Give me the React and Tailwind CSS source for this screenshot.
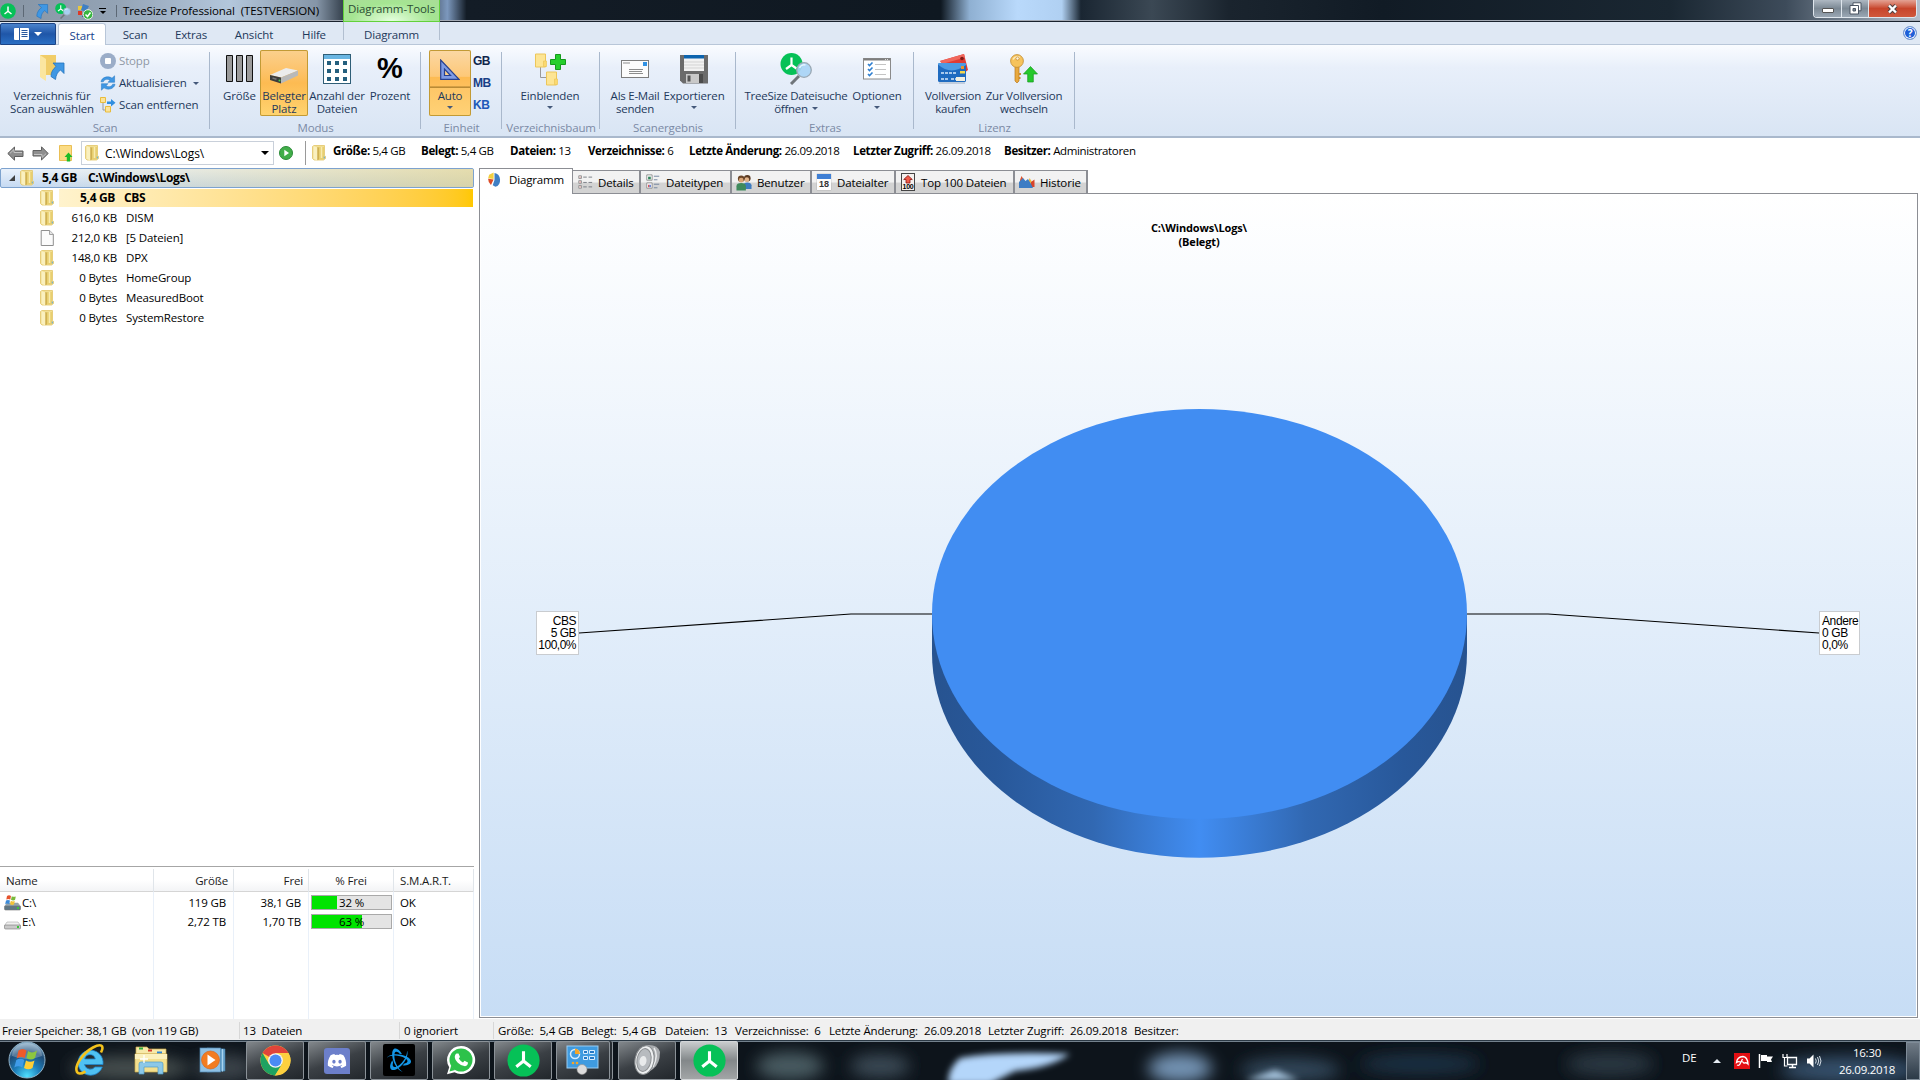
import clsx from 'clsx'
import { FaDiscord } from 'react-icons/fa'
import { SiBattledotnet } from 'react-icons/si'

const TREE = [
  { size: '5,4 GB', name: 'CBS', bar: true },
  { size: '616,0 KB', name: 'DISM' },
  { size: '212,0 KB', name: '[5 Dateien]', file: true },
  { size: '148,0 KB', name: 'DPX' },
  { size: '0 Bytes', name: 'HomeGroup' },
  { size: '0 Bytes', name: 'MeasuredBoot' },
  { size: '0 Bytes', name: 'SystemRestore' },
]

const DRIVES = [
  { name: 'C:\\', size: '119 GB', free: '38,1 GB', pct: 32, system: true },
  { name: 'E:\\', size: '2,72 TB', free: '1,70 TB', pct: 63 },
]

const INFO = [
  { label: 'Größe:', value: '5,4 GB', width: 'w-[88px]' },
  { label: 'Belegt:', value: '5,4 GB', width: 'w-[89px]' },
  { label: 'Dateien:', value: '13', width: 'w-[78px]' },
  { label: 'Verzeichnisse:', value: '6', width: 'w-[101px]' },
  { label: 'Letzte Änderung:', value: '26.09.2018', width: 'w-[164px]' },
  { label: 'Letzter Zugriff:', value: '26.09.2018', width: 'w-[151px]' },
  { label: 'Besitzer:', value: 'Administratoren', width: 'w-[160px]' },
]

const STATUS = [
  { text: 'Größe:  5,4 GB', width: 'w-[83px]' },
  { text: 'Belegt:  5,4 GB', width: 'w-[84px]' },
  { text: 'Dateien:  13', width: 'w-[70px]' },
  { text: 'Verzeichnisse:  6', width: 'w-[94px]' },
  { text: 'Letzte Änderung:', width: 'w-[95px]' },
  { text: '26.09.2018', width: 'w-[64px]' },
  { text: 'Letzter Zugriff:', width: 'w-[82px]' },
  { text: '26.09.2018', width: 'w-[64px]' },
  { text: 'Besitzer:', width: 'w-[60px]' },
]

/* ---------- icons ---------- */

function TreeSizeLogo({ size = 16 }) {
  return (
    <svg width={size} height={size} viewBox="0 0 32 32" className="shrink-0">
      <circle cx="16" cy="16" r="15.6" fill="#06c157" />
      <path d="M16 7v9.5M16 16.5L9 22M16 16.5l7 5.5" stroke="#fff" strokeWidth="3" fill="none" />
    </svg>
  )
}

function SearchLogo({ size = 32 }) {
  return (
    <svg width={size} height={size} viewBox="0 0 32 32" className="shrink-0">
      <circle cx="11.5" cy="11" r="11" fill="#06c157" />
      <path d="M11.5 4.5v7.5M11.5 12l-5.5 4M11.5 12l5 3.5" stroke="#fff" strokeWidth="2.2" fill="none" />
      <path d="M19 23l-8 8" stroke="#6f757a" strokeWidth="3" />
      <circle cx="24" cy="17" r="7.3" fill="#a9d4f5" fillOpacity=".92" stroke="#9aa8b3" strokeWidth="1.3" />
      <path d="M19.5 15a5 5 0 0 1 6-3" stroke="#e4f4ff" strokeWidth="1.6" fill="none" />
    </svg>
  )
}

function Folder() {
  return (
    <svg width="14" height="16" viewBox="0 0 14 16" className="shrink-0">
      <path d="M.5 1.5L2 .5h10.500v10l1 .8v2.200l-2 1.500H2L.5 13.500z" fill="#f1de92" stroke="#e2c568" strokeWidth=".8" />
      <path d="M7 2h5v12.500H7z" fill="#e8cf70" />
      <path d="M1.500 1l4 1.500v13L1.500 14z" fill="#faf0bf" />
      <path d="M5.300 2l1.700.5v12l-1.700.8z" fill="#cfb052" />
      <path d="M9.500 2v11" stroke="#f8ebb0" strokeWidth="1.500" />
      <path d="M12.300 11.500v2" stroke="#5aa7d8" strokeWidth="1" />
    </svg>
  )
}

function BlueArrow({ size = 14 }) {
  return (
    <svg width={size} height={size} viewBox="0 0 14 16" className="shrink-0">
      <path d="M3.500.5H13.500V10L10.500 7C7.500 9 6.500 12 6.500 15.500L2 13C2 9 4.500 5.500 7 3.800z" fill="#3f97e4" stroke="#2474bd" strokeWidth=".7" />
    </svg>
  )
}

function ScanFolder() {
  return (
    <svg width="26" height="30" viewBox="0 0 26 30">
      <path d="M1 1h16v20H6v5L1 22z" fill="#f1cd68" />
      <path d="M1 1l6 4v22l-6-4z" fill="#fbe6a0" />
      <path d="M14 9h11v10.500l-3.500-3.500c-3 2-4.500 5-5 9.500L12 22.500c0-4.500 2-7.500 5-10z" fill="#3f97e4" stroke="#2474bd" strokeWidth=".8" />
    </svg>
  )
}

function StopIcon() {
  return (
    <svg width="16" height="16" viewBox="0 0 16 16">
      <circle cx="8" cy="8" r="8" fill="#9badc8" />
      <rect x="5" y="5" width="6" height="6" rx="1" fill="#fff" />
    </svg>
  )
}

function RefreshIcon() {
  return (
    <svg width="16" height="16" viewBox="0 0 16 16" fill="#3f97e4" stroke="#2474bd" strokeWidth=".5">
      <path d="M1 6.800C1.500 2.500 8 .2 12 3.200L14.600.8V7.300H8L10 5.200C7 3.500 4 4.500 3.300 6.800z" />
      <path d="M15 9.200C14.500 13.500 8 15.800 4 12.800L1.400 15.200V8.700H8L6 10.800C9 12.500 12 11.500 12.700 9.200z" />
    </svg>
  )
}

function RemoveScanIcon() {
  return (
    <svg width="16" height="16" viewBox="0 0 16 16">
      <path d="M3 6v7h4" stroke="#999" fill="none" />
      <path d="M.5.5h5v5h-5zM5.500 9.500h5v5.500h-5z" fill="#fbe39a" stroke="#e9bc3c" />
      <path d="M7 4.500h4V2l4.500 3.800L11 9.500V7H7z" fill="#2f8ee0" />
    </svg>
  )
}

function BarsIcon() {
  return (
    <svg width="28" height="28" viewBox="0 0 28 28">
      <path d="M.5.5h6v26h-6zM10.500.5h6v26h-6zM20.500.5h6v26h-6z" fill="#9b9b9b" stroke="#111" />
    </svg>
  )
}

function DiskIcon() {
  return (
    <svg width="30" height="32" viewBox="0 0 30 32">
      <path d="M1 22L17 15l12 2.500L12 24.500z" fill="#ececec" />
      <path d="M1 22l11 2.500v6L1 27z" fill="#3c3c3c" />
      <path d="M12 24.500l17-7v5l-17 8z" fill="#b9b9b9" />
      <path d="M3.500 25l4 1.200" stroke="#777" strokeWidth="1.500" />
      <circle cx="10.500" cy="27.500" r="1" fill="#3fd34a" />
    </svg>
  )
}

function GridIcon() {
  return (
    <svg width="28" height="30" viewBox="0 0 28 30">
      <rect x=".5" y=".5" width="27" height="29" fill="#fff" stroke="#2f5e77" />
      <rect x="1" y="1" width="26" height="4" fill="#69b5e2" />
      <path d="M4 7h4v4H4zM12 7h4v4h-4zM20 7h4v4h-4zM4 15h4v4H4zM12 15h4v4h-4zM20 15h4v4h-4zM4 23h4v4H4zM12 23h4v4h-4zM20 23h4v4h-4z" fill="#245f7e" />
    </svg>
  )
}

function RulerIcon() {
  return (
    <svg width="20" height="21" viewBox="0 0 20 21">
      <path d="M.7 1v19.300H19z" fill="#7f9be4" stroke="#27408f" strokeWidth="1.200" />
      <path d="M4.500 10v6.500h6z" fill="#ffd28a" stroke="#27408f" strokeWidth="1.200" />
    </svg>
  )
}

function ShowIcon() {
  return (
    <svg width="32" height="33" viewBox="0 0 32 33">
      <path d="M6.500 14v10.500H13" stroke="#999" fill="none" />
      <path d="M1.500 1h10v13h-10zM12.500 19h10v13h-10z" fill="#fde594" stroke="#ecc65a" />
      <path d="M9.500 8h3v5.500h-3zM20.500 26h3v5.500h-3z" fill="#fbd970" stroke="#ecc65a" strokeWidth=".7" />
      <path d="M21.500 1.500h5v5h5v5h-5v5h-5v-5h-5v-5h5z" fill="#25cf2c" stroke="#159a1c" />
    </svg>
  )
}

function MailIcon() {
  return (
    <svg width="28" height="18" viewBox="0 0 28 18">
      <rect x=".5" y=".5" width="27" height="17" fill="#fcfcfc" stroke="#7d7d7d" />
      <rect x="22" y="2" width="4" height="4" fill="#3292e4" />
      <path d="M2 3h7M8 9.500h14M8 11.500h13M8 13.500h14" stroke="#8d8d8d" />
    </svg>
  )
}

function FloppyIcon() {
  return (
    <svg width="28" height="29" viewBox="0 0 28 29">
      <path d="M0 0h28v28.500H3L0 25.500z" fill="#6b6b6b" />
      <path d="M4 0h20v16H4z" fill="#f2f2f2" />
      <path d="M4 0h20v3.500H4z" fill="#0b63ae" />
      <path d="M4 7h20M4 10h20M4 13h20" stroke="#d3d3d3" />
      <path d="M6 19h13v9H6z" fill="#c9c9c9" />
      <path d="M7.500 20.500h3v6h-3z" fill="#555" />
      <path d="M19 19h4v9h-4z" fill="#4b4b4b" />
    </svg>
  )
}

function OptionsIcon() {
  return (
    <svg width="28" height="22" viewBox="0 0 28 22">
      <rect x=".5" y=".5" width="27" height="20.500" fill="#fff" stroke="#8a8a8a" />
      <path d="M1 1.500h26" stroke="#7e7e7e" strokeWidth="2" />
      <path d="M22 1.500h4" stroke="#ddd" strokeDasharray="1 1" />
      <path d="M5 6l1.500 1.500L9.500 4.500M5 11l1.500 1.500L9.500 9.500M5 16l1.500 1.500L9.500 14.500" stroke="#2f7fd0" strokeWidth="1.600" fill="none" />
      <path d="M12 6.500h11M12 11.500h11M12 16.500h11" stroke="#c4c4c4" />
    </svg>
  )
}

function CardsIcon() {
  return (
    <svg width="32" height="31" viewBox="0 0 32 31">
      <path d="M3 7L27 0l4 16-8 6z" fill="#df3b35" />
      <path d="M3 7L27 0l1 3.500L5 10z" fill="#f0675c" />
      <circle cx="25" cy="4.500" r="1.800" fill="#801a16" />
      <rect x="1" y="9" width="28" height="19" rx="1.500" fill="#1f6bc0" />
      <path d="M1 10.500Q14 22 29 11v-1q0-1-1.500-1h-25Q1 9 1 10.500z" fill="#4c9be4" />
      <path d="M24 12h3v3h-3z" fill="#e9932c" />
      <path d="M23 17h5v2.500h-5z" fill="#f6d64c" />
      <path d="M4 19h16M4 25h8M14 25h5" stroke="#d7e9fa" strokeWidth="1.500" strokeDasharray="3 1" />
      <path d="M19 23h9v4h-9z" fill="#f3efe0" />
      <path d="M2 29h26" stroke="#9fb0c4" />
    </svg>
  )
}

function KeyIcon() {
  return (
    <svg width="28" height="30" viewBox="0 0 28 30">
      <path d="M5 12h4v15l-2 2-2-2z" fill="#e9a93e" stroke="#b87a20" strokeWidth=".7" />
      <path d="M9 19h2v2H9zM9 23h1.500v2H9z" fill="#c98b2c" />
      <circle cx="7" cy="7" r="6.400" fill="#f6c35c" stroke="#c08a2f" strokeWidth=".8" />
      <path d="M3 5.500a5 5 0 0 1 7-2" stroke="#fdeab8" strokeWidth="1.600" fill="none" />
      <circle cx="7.500" cy="4.500" r="1.600" fill="#fff5dc" stroke="#b87a20" strokeWidth=".6" />
      <path d="M20.500 12.500l7 7.500h-4.200v8h-5.600v-8h-4.200z" fill="#25c92c" stroke="#159a1c" strokeWidth=".7" />
    </svg>
  )
}

function NavArrow({ flip }) {
  return (
    <svg width="17" height="15" viewBox="0 0 17 15" className={clsx('shrink-0', flip && 'rotate-180')}>
      <path d="M.8 7.500L7.500 1v4H16v5.500H7.500v3.700z" fill="#8e8e8e" stroke="#5f5f5f" />
      <path d="M3 7.300L7 3.500v3h8" stroke="#c4c4c4" fill="none" />
    </svg>
  )
}

function DocIcon() {
  return (
    <svg width="14" height="16" viewBox="0 0 14 16" className="shrink-0">
      <path d="M1.200.5h8.500l3.600 3.700v11.300H1.200z" fill="#fbfbfb" stroke="#8f8f8f" />
      <path d="M9.500.5v4h4" fill="#e4e4e4" stroke="#8f8f8f" strokeWidth=".8" />
    </svg>
  )
}

function PieIcon() {
  return (
    <svg width="15" height="16" viewBox="0 0 16 18">
      <path d="M8 9V1a7 8 0 0 1 1 15.700L6 15z" fill="#3f7fc4" />
      <path d="M7 8V.5L2 3 .8 7z" fill="#f2cf3f" />
      <path d="M7 8.500L.8 7.500Q.8 12 4 14.500z" fill="#dd4b27" />
    </svg>
  )
}

function ListIcon({ typed }) {
  return (
    <svg width="16" height="16" viewBox="0 0 16 18">
      {typed ? (
        <>
          <path d="M1 1h6v6H1zM1 10h6v6H1z" fill="#fff" stroke="#8c8c8c" />
          <path d="M2.500 3h3v3h-3z" fill="#31855b" />
          <path d="M2.500 12h1.500v3H2.500z" fill="#d44" />
          <path d="M4 12h1.500v3H4z" fill="#46c" />
          <path d="M9 2.500h6M9 6.500h4M9 11.500h6M9 15.500h4" stroke="#6b7e99" />
        </>
      ) : (
        <>
          <path d="M1 2h3v3H1zM1 7.500h3v3H1zM1 13h3v3H1z" fill="#fff" stroke="#8c8c8c" />
          <path d="M2 3h1v1H2zM2 8.500h1v1H2zM2 14h1v1H2z" fill="#c33" />
          <path d="M6 3.500h4M12 3.500h4M6 9.500h4M12 9.500h4M6 14.500h4M12 14.500h4" stroke="#71767e" />
        </>
      )}
    </svg>
  )
}

function UsersIcon() {
  return (
    <svg width="17" height="17" viewBox="0 0 17 18">
      <circle cx="12" cy="4.500" r="3.500" fill="#5a3a22" />
      <circle cx="11.500" cy="6" r="2.500" fill="#e2b48a" />
      <path d="M8 16v-4q0-3 4-3t4.500 3v4z" fill="#3d7cc0" />
      <circle cx="5.500" cy="5" r="3.500" fill="#6b4628" />
      <circle cx="5.500" cy="6.500" r="2.500" fill="#d9a577" />
      <path d="M.5 17.500V13q0-3.500 5-3.500t5 3.500v4.500z" fill="#3f8a5c" />
    </svg>
  )
}

function CalendarIcon() {
  return (
    <span className="flex h-[16px] w-[14px] flex-col bg-[#fdfdfd] shadow-[0_0_1px_#888]">
      <span className="h-[5px] bg-[#3f7fd4]" />
      <span className="text-center font-['Liberation_Sans'] text-[9px] leading-[11px] font-bold tracking-normal text-[#333]">18</span>
    </span>
  )
}

function Top100Icon() {
  return (
    <span className="flex h-[18px] w-[14px] flex-col items-center border border-[#444] bg-[#f4f0ee] pt-px">
      <svg width="10" height="9" viewBox="0 0 10 9">
        <path d="M5 .5l4.300 4H7V8H3V4.500H.7z" fill="#f05a48" stroke="#8c1410" strokeWidth=".8" />
      </svg>
      <span className="font-['Liberation_Sans'] text-[7px] leading-[6px] font-bold tracking-[-0.3px] text-black">100</span>
    </span>
  )
}

function HistoryIcon() {
  return (
    <svg width="16" height="16" viewBox="0 0 16 16">
      <path d="M1 11V6l1.500-4L5 6l1 6z" fill="#e0522b" />
      <path d="M8 13l2.500-9 2 3 1 6z" fill="#f0b93a" />
      <path d="M12 13V8l3.500-2.500V13z" fill="#d8442a" />
      <path d="M0 14V8l4-4 2.500 3L9 5l2.500 4L14 14z" fill="#3d7cc4" />
    </svg>
  )
}

function DriveIcon({ system }) {
  return (
    <svg width="17" height="17" viewBox="0 0 17 17" className="shrink-0">
      <path d="M3 9h11l2.500 3.500h-16z" fill={system ? '#93a5ae' : '#f0f0f0'} stroke="#999" strokeWidth=".5" />
      <rect x=".5" y="12" width="16" height="4" rx="1" fill={system ? '#5f7783' : '#c9c9c9'} stroke="#777" strokeWidth=".6" />
      <rect x="13" y="13" width="2" height="2" fill="#3bc43b" />
      {system && (
        <>
          <path d="M3 2q2-1.500 4 0L6.300 5.500q-2-1-4 0z" fill="#e5532d" />
          <path d="M7.800 2.200q2 1.200 4 .2L11 6q-2 1-4-.2z" fill="#79b93b" />
          <path d="M2 6.500q2-1.200 4 0L5.200 10q-2-1-4 0z" fill="#3b8ad8" />
          <path d="M6.800 6.800q2 1.200 4 .2L10 10.500q-2 1-4-.2z" fill="#f3c238" />
        </>
      )}
    </svg>
  )
}

function Caret({ className }) {
  return <span className={clsx('inline-block border-x-[3px] border-t-[3px] border-x-transparent', className || 'border-t-[#44597a]')} />
}

/* ---------- title bar ---------- */

function TitleBar() {
  return (
    <div className="relative flex h-[22px] shrink-0 overflow-hidden bg-[#101a24]">
      <svg className="absolute inset-0" width="1920" height="22">
        <defs>
          <linearGradient id="glass" x1="0" x2="1">
            <stop offset="0" stopColor="#8794a3" />
            <stop offset=".06" stopColor="#93a3b5" />
            <stop offset=".12" stopColor="#b3c7dc" />
            <stop offset=".165" stopColor="#8595a7" />
            <stop offset=".178" stopColor="#3a4653" />
            <stop offset=".225" stopColor="#4d5d72" />
            <stop offset=".233" stopColor="#7c98bd" />
            <stop offset=".243" stopColor="#131c26" />
            <stop offset=".49" stopColor="#0f1821" />
            <stop offset=".505" stopColor="#8fb0d2" />
            <stop offset=".53" stopColor="#b9d9fb" />
            <stop offset=".553" stopColor="#b0d0f2" />
            <stop offset=".563" stopColor="#1a2632" />
            <stop offset=".6" stopColor="#3b4854" />
            <stop offset=".64" stopColor="#1a242e" />
            <stop offset=".72" stopColor="#111b25" />
            <stop offset=".87" stopColor="#1a2732" />
            <stop offset=".93" stopColor="#3d4b5a" />
            <stop offset="1" stopColor="#b4c0cd" />
          </linearGradient>
        </defs>
        <rect width="1920" height="22" fill="url(#glass)" />
        <rect y="20" width="1920" height="1" fill="#a3a9b3" />
        <rect y="21" width="1920" height="1" fill="#1a222d" />
      </svg>
      <div className="relative flex w-[343px] items-center text-[11.5px] text-black">
        <TreeSizeLogo />
        <span className="ml-[7px] h-3 w-px bg-[#5c6875]" />
        <span className="ml-[10px]"><BlueArrow size={15} /></span>
        <span className="ml-[6px]"><SearchLogo size={16} /></span>
        <svg className="ml-[6px]" width="16" height="17" viewBox="0 0 16 17">
          <path d="M1 3h5v4H1z" fill="#e9c83f" />
          <path d="M6 1l6 2-3 6-5-2z" fill="#3f7fc4" />
          <path d="M1 8h4v4H1z" fill="#dc3a28" />
          <path d="M8 8h3v6H5z" fill="#2c4b91" />
          <circle cx="11" cy="11.500" r="4.800" fill="#36b53f" stroke="#e6efe6" />
          <path d="M8.500 11.500l2 2 3-4" stroke="#fff" strokeWidth="1.500" fill="none" />
        </svg>
        <span className="ml-[6px] flex flex-col items-center gap-[2px]">
          <span className="h-px w-[7px] bg-black" />
          <Caret className="border-t-black" />
        </span>
        <span className="ml-[10px] h-3 w-px bg-[#5c6875]" />
        <span className="ml-[6px] whitespace-pre tracking-[-0.1px]">TreeSize Professional  (TESTVERSION)</span>
      </div>
      <div className="relative flex h-[22px] w-[97px] justify-center border-x border-b border-[#62d13a] bg-[radial-gradient(ellipse_at_bottom,#e6ffdf,#a5e592_60%,#a9dd98)] text-[11.5px] leading-[18px] tracking-[-0.1px] text-[#2c4c35]">
        Diagramm-Tools
      </div>
      <div className="relative mr-[3px] ml-auto flex h-[18px] overflow-hidden rounded-b border border-t-0 border-[#dfe6ed]">
        <span className="flex w-[28px] items-center justify-center border-r border-[#dfe6ed] bg-linear-to-b from-[#aeb8c2] via-[#7b8894] to-[#9aa7b4]">
          <span className="mt-1 h-[5px] w-[12px] rounded-[1px] border border-[#555] bg-white" />
        </span>
        <span className="flex w-[27px] items-center justify-center border-r border-[#dfe6ed] bg-linear-to-b from-[#aeb8c2] via-[#7b8894] to-[#9aa7b4]">
          <svg width="13" height="13" viewBox="0 0 13 13" fill="#fff" stroke="#4b5563">
            <path d="M4 .8h8v8H4z" />
            <path d="M1 3.500h8.500V12H1z" />
            <path d="M4 6.500h2.500V9H4z" fill="#7b8894" />
          </svg>
        </span>
        <span className="flex w-[47px] items-center justify-center bg-linear-to-b from-[#e3a294] via-[#c7452b] to-[#d0583c]">
          <svg width="13" height="12" viewBox="0 0 13 12">
            <path d="M3 2.500l7 7M10 2.500l-7 7" stroke="#4d4242" strokeWidth="4.400" />
            <path d="M3 2.500l7 7M10 2.500l-7 7" stroke="#fff" strokeWidth="2.400" />
          </svg>
        </span>
      </div>
    </div>
  )
}

/* ---------- ribbon ---------- */

function RibbonTabs() {
  return (
    <div className="flex h-[23px] shrink-0 border-b border-[#b8c6d8] bg-[#dfe8f4] text-[11.5px] leading-[26px] text-[#1e395b]">
      <div className="mt-px mr-[2px] flex h-[22px] w-[56px] items-center justify-center gap-[5px] rounded-t-[2px] border border-[#1c4486] bg-linear-to-b from-[#4a83cb] via-[#1f56a8] to-[#2a6fc4]">
        <svg width="15" height="12" viewBox="0 0 15 12">
          <rect width="15" height="12" rx="1" fill="#fff" />
          <path d="M5.500 0v12" stroke="#2c5a9e" />
          <path d="M7.500 2.500h6M7.500 4.500h6M7.500 6.500h6M7.500 8.500h6" stroke="#2c5a9e" />
        </svg>
        <span className="border-x-4 border-t-4 border-x-transparent border-t-white" />
      </div>
      <div className="relative z-10 mt-px h-[22px] w-[48px] rounded-t-[3px] border border-b-0 border-[#b8c6d8] bg-white text-center leading-[23px] text-[#15428b]">Start</div>
      <div className="w-[58px] text-center">Scan</div>
      <div className="w-[54px] text-center">Extras</div>
      <div className="w-[72px] text-center">Ansicht</div>
      <div className="w-[48px] text-center">Hilfe</div>
      <div className="ml-[5px] h-[18px] w-[97px] border-x border-[#b2bfd0] text-center">Diagramm</div>
      <div className="mt-[4px] mr-[3px] ml-auto flex size-[14px] items-center justify-center rounded-full border border-[#7c9cd0] bg-[#1f5fd8] text-[10px] leading-none font-bold text-white ring-1 ring-white ring-inset">?</div>
    </div>
  )
}

function Group({ title, className, children }) {
  return (
    <div className={clsx('relative flex h-full shrink-0 flex-col', className)}>
      <div className="flex h-[76px] items-start pt-[5px]">{children}</div>
      <div className="text-center leading-[14px] text-[#7b8aa5]">{title}</div>
      <span className="absolute top-[7px] right-0 h-[77px] w-px bg-[#a9b8cc]" />
    </div>
  )
}

function BigButton({ icon, lines, caret, className }) {
  return (
    <div className={clsx('flex h-[66px] shrink-0 flex-col items-center whitespace-nowrap', className)}>
      <div className="mb-px flex h-[38px] items-center justify-center">{icon}</div>
      {lines.map((l, i) => (
        <div key={l} className="flex h-[13px] items-center gap-[4px] leading-[13px]">
          {l}
          {caret && i === 1 && <Caret />}
        </div>
      ))}
      {caret && lines.length === 1 && <Caret className="mt-[4px] border-t-[#44597a]" />}
    </div>
  )
}

function Ribbon() {
  return (
    <div className="flex h-[93px] shrink-0 border-b-2 border-[#a9b8cc] bg-linear-to-b from-[#fafcff] via-[#e8effa] via-25% to-[#d9e5f4] text-[11.5px] text-[#1e395b]">
      <Group title="Scan" className="w-[210px]">
        <BigButton className="ml-[8px] w-[88px]" icon={<ScanFolder />} lines={['Verzeichnis für', 'Scan auswählen']} />
        <div className="ml-[4px] flex flex-col leading-[22px]">
          <div className="flex items-center gap-[3px] text-[#8f98a5]"><StopIcon />Stopp</div>
          <div className="flex items-center gap-[3px]"><RefreshIcon />Aktualisieren <Caret className="ml-[3px] border-t-[#44597a]" /></div>
          <div className="flex items-center gap-[3px]"><RemoveScanIcon />Scan entfernen</div>
        </div>
      </Group>
      <Group title="Modus" className="w-[211px]">
        <BigButton className="ml-[9px] w-[41px]" icon={<BarsIcon />} lines={['Größe']} />
        <BigButton className="w-[48px] rounded-[2px] bg-linear-to-b from-[#fbd08d] via-[#fdbb52] via-50% to-[#ffd470] ring-1 ring-[#c29a35] ring-inset" icon={<DiskIcon />} lines={['Belegter', 'Platz']} />
        <BigButton className="w-[58px]" icon={<GridIcon />} lines={['Anzahl der', 'Dateien']} />
        <BigButton
          className="w-[48px]"
          icon={<span className="font-['Liberation_Sans'] text-[29px] font-bold tracking-normal text-black">%</span>}
          lines={['Prozent']}
        />
      </Group>
      <Group title="Einheit" className="w-[81px]">
        <BigButton
          className="ml-[8px] w-[42px] rounded-[2px] bg-[linear-gradient(#fbd8a5,#fdc878_40%,#fdbb52_41%,#fdbf5c_55%,#b98a35_55.500%,#b98a35_57%,#fdc667_57.500%,#ffd276)] ring-1 ring-[#c29a35] ring-inset"
          icon={<RulerIcon />}
          lines={['Auto']}
          caret
        />
        <div className="ml-[2px] flex flex-col font-['Liberation_Sans'] text-[12px] leading-[22px] font-bold tracking-[-0.5px]">
          <span className="text-[#10254c]">GB</span>
          <span className="text-[#173f86]">MB</span>
          <span className="text-[#2159b8]">KB</span>
        </div>
      </Group>
      <Group title="Verzeichnisbaum" className="w-[98px]">
        <BigButton className="w-[96px]" icon={<ShowIcon />} lines={['Einblenden']} caret />
      </Group>
      <Group title="Scanergebnis" className="w-[136px]">
        <BigButton className="ml-[7px] w-[56px] tracking-[-0.25px]" icon={<MailIcon />} lines={['Als E-Mail', 'senden']} />
        <BigButton className="w-[62px]" icon={<FloppyIcon />} lines={['Exportieren']} caret />
      </Group>
      <Group title="Extras" className="w-[178px]">
        <BigButton className="ml-[8px] w-[104px] tracking-[-0.25px]" icon={<SearchLogo />} lines={['TreeSize Dateisuche', 'öffnen']} caret />
        <BigButton className="w-[58px]" icon={<OptionsIcon />} lines={['Optionen']} caret />
      </Group>
      <Group title="Lizenz" className="w-[161px]">
        <BigButton className="ml-[9px] w-[60px] tracking-[-0.25px]" icon={<CardsIcon />} lines={['Vollversion', 'kaufen']} />
        <BigButton className="w-[82px] tracking-[-0.25px]" icon={<KeyIcon />} lines={['Zur Vollversion', 'wechseln']} />
      </Group>
    </div>
  )
}

/* ---------- address bar ---------- */

function AddressBar() {
  return (
    <div className="flex h-[30px] shrink-0 items-center bg-white text-[11.5px]">
      <span className="ml-[7px]"><NavArrow /></span>
      <span className="ml-[8px]"><NavArrow flip /></span>
      <svg className="ml-[10px]" width="14" height="17" viewBox="0 0 14 17">
        <path d="M.5.5h12v15H.5z" fill="#fbdc85" stroke="#eabf55" />
        <path d="M9.500 7.500l4 4.500h-2.300v4.500H7.800V12H5.500z" fill="#1fbc26" />
      </svg>
      <div className="ml-[8px] flex h-[24px] w-[193px] items-center border border-[#c9d0da] pl-[3px]">
        <Folder />
        <span className="ml-[6px] pt-px text-[12px] tracking-[-0.1px]">C:\Windows\Logs\</span>
        <span className="mr-[4px] ml-auto border-x-4 border-t-4 border-x-transparent border-t-black" />
      </div>
      <svg className="ml-[5px]" width="14" height="14" viewBox="0 0 14 14">
        <circle cx="7" cy="7" r="6.500" fill="#41ae49" stroke="#2c8a38" />
        <path d="M5.300 3.800L10 7l-4.700 3.200z" fill="#fff" />
      </svg>
      <span className="ml-[12px] h-[24px] w-px bg-[#9a9a9a]" />
      <span className="ml-[6px]"><Folder /></span>
      <div className="mb-[5px] ml-[7px] flex whitespace-nowrap">
        {INFO.map((i) => (
          <div key={i.label} className={clsx('shrink-0 tracking-[-0.35px]', i.width)}>
            <b>{i.label}</b> {i.value}
          </div>
        ))}
      </div>
    </div>
  )
}

/* ---------- left side ---------- */

function TreePanel() {
  return (
    <div className="flex h-[698px] flex-col text-[11.5px]">
      <div className="flex h-[20px] w-[474px] items-center rounded-[2px] border border-[#7da2ce] bg-linear-to-b from-[#e9f1fb] to-[#c6daf2] pl-[7px]">
        <svg width="8" height="8" viewBox="0 0 8 8">
          <path d="M7 1v6H1z" fill="#404040" />
        </svg>
        <span className="ml-[4px]"><Folder /></span>
        <div className="ml-[5px] flex h-[18px] flex-1 items-center bg-linear-to-r from-transparent to-[#e3cf7a]/60 pl-[3px] text-[12px] font-bold tracking-[-0.35px]">
          <span className="w-[46px]">5,4 GB</span>
          <span>C:\Windows\Logs\</span>
        </div>
      </div>
      {TREE.map((row) => (
        <div key={row.name} className="flex h-[20px] w-[473px] items-center pl-[40px]">
          {row.file ? <DocIcon /> : <Folder />}
          <div
            className={clsx(
              'ml-[5px] flex h-[18px] flex-1 items-center',
              row.bar && 'bg-linear-to-r from-[#fff3cd] to-[#ffc800] text-[12px] font-bold tracking-[-0.35px]'
            )}
          >
            <span className={clsx('mr-[9px] text-right', row.bar ? 'w-[56px]' : 'w-[58px]')}>{row.size}</span>
            <span>{row.name}</span>
          </div>
        </div>
      ))}
    </div>
  )
}

function DrivePanel() {
  const cols = 'grid grid-cols-[154px_80px_75px_85px_80px]'
  return (
    <div className="flex h-[153px] w-[474px] flex-col border-t border-[#a6a6a6] text-[11.5px]">
      <div className={clsx(cols, 'mt-[2px] h-[23px] border-b border-[#d5d5d5] bg-linear-to-b from-white from-50% to-[#f3f4f6] leading-[23px] text-[#1b1b1b]')}>
        <span className="border-r border-[#e0e5ea] pl-[6px]">Name</span>
        <span className="border-r border-[#e0e5ea] pr-[5px] text-right">Größe</span>
        <span className="border-r border-[#e0e5ea] pr-[5px] text-right">Frei</span>
        <span className="border-r border-[#e0e5ea] text-center">% Frei</span>
        <span className="border-r border-[#e0e5ea] pl-[6px]">S.M.A.R.T.</span>
      </div>
      <div className={clsx(cols, 'flex-1')}>
        <div className="border-r border-[#e9f0f9] pt-px pl-[4px]">
          {DRIVES.map((d) => (
            <div key={d.name} className="flex h-[19px] items-center gap-[1px]"><DriveIcon system={d.system} />{d.name}</div>
          ))}
        </div>
        <div className="border-r border-[#e9f0f9] pt-px pr-[7px] text-right leading-[19px]">
          {DRIVES.map((d) => <div key={d.name}>{d.size}</div>)}
        </div>
        <div className="border-r border-[#e9f0f9] pt-px pr-[7px] text-right leading-[19px]">
          {DRIVES.map((d) => <div key={d.name}>{d.free}</div>)}
        </div>
        <div className="border-r border-[#e9f0f9] pt-[3px] pl-[2px]">
          {DRIVES.map((d) => (
            <div key={d.name} className="relative mb-[4px] h-[15px] w-[81px] border border-[#a9a9a9] bg-[#e4e4e4] text-center leading-[13px]">
              <div className="h-full bg-[#00e400]" style={{ width: `${d.pct}%` }} />
              <span className="absolute inset-0">{d.pct} %</span>
            </div>
          ))}
        </div>
        <div className="border-r border-[#e9f0f9] pt-px pl-[6px] leading-[19px]">
          {DRIVES.map((d) => <div key={d.name}>OK</div>)}
        </div>
      </div>
    </div>
  )
}

/* ---------- right side ---------- */

const TABS = [
  { label: 'Details', icon: <ListIcon />, width: 'w-[68px]' },
  { label: 'Dateitypen', icon: <ListIcon typed />, width: 'w-[91px]' },
  { label: 'Benutzer', icon: <UsersIcon />, width: 'w-[80px]' },
  { label: 'Dateialter', icon: <CalendarIcon />, width: 'w-[84px]' },
  { label: 'Top 100 Dateien', icon: <Top100Icon />, width: 'w-[119px]' },
  { label: 'Historie', icon: <HistoryIcon />, width: 'w-[73px]' },
]

function Chart() {
  return (
    <div className="relative h-[821px] bg-linear-to-b from-white to-[#c7ddf5]">
      <svg width="1434" height="820" viewBox="481 195 1434 820">
        <defs>
          <linearGradient id="rim" x1="0" x2="1">
            <stop offset="0" stopColor="#275390" />
            <stop offset=".12" stopColor="#28589a" />
            <stop offset=".3" stopColor="#3168b2" />
            <stop offset=".5" stopColor="#418df2" />
            <stop offset=".7" stopColor="#3168b2" />
            <stop offset=".88" stopColor="#28589a" />
            <stop offset="1" stopColor="#275390" />
          </linearGradient>
        </defs>
        <path d="M932 614v39a267.500 204.800 0 0 0 535 0v-39z" fill="url(#rim)" />
        <ellipse cx="1199.500" cy="614" rx="267.500" ry="205" fill="#418df2" />
        <path d="M579 633L851 614H932M1467 614H1548L1819 633" stroke="#000" strokeWidth="1.100" fill="none" />
      </svg>
      <div className="absolute top-[26px] left-0 flex w-[1436px] flex-col text-center text-[11px] leading-[14px] font-bold tracking-[-0.15px] text-black">
        <span>C:\Windows\Logs\</span>
        <span>(Belegt)</span>
      </div>
      <div className="absolute top-[416px] left-[55px] flex w-[43px] flex-col border border-[#c9ccd0] bg-white py-[3px] pr-[2px] text-right font-['Liberation_Sans'] text-[12px] leading-[12px] tracking-[-0.5px] text-black">
        <span>CBS</span>
        <span>5 GB</span>
        <span>100,0%</span>
      </div>
      <div className="absolute top-[416px] left-[1338px] flex w-[41px] flex-col border border-[#c9ccd0] bg-white py-[3px] pl-[2px] font-['Liberation_Sans'] text-[12px] leading-[12px] tracking-[-0.4px] text-black">
        <span>Andere</span>
        <span>0 GB</span>
        <span>0,0%</span>
      </div>
    </div>
  )
}

function RightPanel() {
  return (
    <div className="flex w-[1441px] flex-col bg-white">
      <div className="flex h-[25px] items-end text-[11.5px]">
        <div className="relative z-10 -mb-px flex h-[26px] w-[94px] items-center gap-[7px] border border-b-0 border-[#8c8e94] bg-white pb-[3px] pl-[7px]">
          <PieIcon />
          Diagramm
        </div>
        {TABS.map((t) => (
          <div
            key={t.label}
            className={clsx('flex h-[23px] items-center gap-[5px] border-t border-r-2 border-[#8c8e94] bg-linear-to-b from-[#f2f2f2] from-50% to-[#d3d3d3] to-55% pl-[4px] whitespace-nowrap', t.width)}
          >
            <span className="flex w-[16px] shrink-0 justify-center">{t.icon}</span>
            <span className="pt-[2px]">{t.label}</span>
          </div>
        ))}
      </div>
      <div className="mr-[2px] mb-px flex-1 border border-[#8c8e94] p-px">
        <Chart />
      </div>
    </div>
  )
}

function StatusBar() {
  return (
    <div className="flex h-[21px] shrink-0 items-center bg-[#f0f0f0] pt-[2px] text-[11.5px] whitespace-pre text-black">
      <span className="w-[239px] pl-[2px]">Freier Speicher: 38,1 GB  (von 119 GB)</span>
      <span className="w-[160px] border-l border-[#d7d7d7] pl-[3px]">13  Dateien</span>
      <span className="w-[94px] border-l border-[#d7d7d7] pl-[4px]">0 ignoriert</span>
      <span className="flex border-l border-[#d7d7d7] pl-[4px]">
        {STATUS.map((s, i) => (
          <span key={i} className={clsx('shrink-0', s.width)}>{s.text}</span>
        ))}
      </span>
    </div>
  )
}

/* ---------- taskbar ---------- */

function TaskButton({ active, stacked, className, children }) {
  return (
    <div
      className={clsx(
        'flex h-[39px] shrink-0 items-center justify-center rounded-[2px] border',
        active ? 'border-[#d3d6d8] bg-linear-to-b from-[#c9cccd] via-[#83888a] to-[#a2a5a6]' : 'border-[#8b9298] bg-linear-160 from-[#83888c] via-[#3b4045] to-[#22272c]',
        stacked && 'shadow-[2px_0_0_#252b31,3px_0_0_#8b9298]',
        className || 'w-[58px]'
      )}
    >
      {children}
    </div>
  )
}

function StartOrb() {
  return (
    <svg width="38" height="38" viewBox="0 0 38 38">
      <defs>
        <radialGradient id="orb" cx=".5" cy=".95" r=".9">
          <stop offset="0" stopColor="#4fe0ff" />
          <stop offset=".4" stopColor="#1d7fbb" />
          <stop offset=".75" stopColor="#1f4d78" />
          <stop offset="1" stopColor="#7fa6c2" />
        </radialGradient>
      </defs>
      <circle cx="19" cy="19" r="18" fill="url(#orb)" stroke="#8fb2c8" strokeWidth="1" />
      <path d="M4 15a15 13 0 0 1 30 0q-15 6-30 0z" fill="#fff" fillOpacity=".25" />
      <path d="M10.500 9.500q4-3 8 0L16.700 17q-4-2-8 .5z" fill="#ee5a2a" />
      <path d="M20 10q4 3 9-.5L27 17q-4 3-8.500 0z" fill="#8cc63f" />
      <path d="M8.300 19q4-2.500 8 0l-2 7.500q-4-2.500-8 0z" fill="#3f9be8" />
      <path d="M18 19.500q4 2.500 8.500 0l-2 7.500q-4 2.500-8.500 0z" fill="#ffce35" />
    </svg>
  )
}

function IeIcon() {
  return (
    <svg width="32" height="32" viewBox="0 0 32 32">
      <path d="M29 20.500H10.500a6 6 0 0 0 10.500 2.500h7.300A12.500 12.500 0 1 1 29 17.500zM10.700 15h10.600a5.400 5.400 0 0 0-10.600 0z" fill="#4fc1f2" stroke="#1f86cf" strokeWidth=".8" fillRule="evenodd" />
      <path d="M27 8.500C31 1 26.500-.5 19 3.500 9 9 0 22 3 28c1.500 2.500 5 1.500 8.500-.5" stroke="#f4c21c" strokeWidth="2.600" fill="none" />
    </svg>
  )
}

function ExplorerIcon() {
  return (
    <svg width="34" height="32" viewBox="0 0 34 32">
      <path d="M2 3h11l2 2h17v5H2z" fill="#f7e9a9" stroke="#c9a94c" strokeWidth=".7" />
      <path d="M5 3.500h4v2H5z" fill="#2fae3d" />
      <path d="M14 5.500h4v2h-4z" fill="#d23c2c" />
      <path d="M23 7.500h5v2h-5z" fill="#2c86d8" />
      <path d="M1 10h32v18H1z" fill="#f3df8e" stroke="#c9a94c" strokeWidth=".7" />
      <path d="M1 10h32v5H1z" fill="#fbf0bd" />
      <path d="M5 30V20q0-2 2-2h20q2 0 2 2v10h-5v-7H10v7z" fill="#8cc8e8" stroke="#4f9cc8" strokeWidth=".7" />
      <path d="M10 11v8M6 15h8" stroke="#fff" strokeWidth="1.300" />
    </svg>
  )
}

function PlayerIcon() {
  return (
    <svg width="27" height="26" viewBox="0 0 27 26">
      <path d="M8 1l18 1v22l-18 1z" fill="#6ba6cf" stroke="#3f7aa5" strokeWidth=".6" />
      <path d="M23.500 2v22.500" stroke="#a9d3ee" />
      <rect x="1" y="1" width="20.500" height="24" fill="#8fc1e4" stroke="#4e87b1" strokeWidth=".7" />
      <circle cx="11.500" cy="13" r="9" fill="#f27c21" stroke="#d86010" strokeWidth=".6" />
      <path d="M8.500 7.500l8 5.500-8 5.500z" fill="#fff" />
    </svg>
  )
}

function ChromeIcon() {
  return (
    <svg width="31" height="31" viewBox="0 0 32 32">
      <circle cx="16" cy="16" r="15.500" fill="#fdd03f" />
      <path d="M16 16L2.600 8.200A15.500 15.500 0 0 1 29.400 8.300H16z" fill="#e0443a" />
      <path d="M2.600 8.200A15.500 15.500 0 0 0 15.500 31.500L22.500 20 16 16 9.500 20z" fill="#1ea261" />
      <path d="M16 8.300h13.400A15.500 15.500 0 0 1 15.500 31.500L22.600 20z" fill="#fdd03f" />
      <circle cx="16" cy="16" r="7.600" fill="#f4f4f4" />
      <circle cx="16" cy="16" r="6.200" fill="#4a8af4" />
    </svg>
  )
}

function DiscordTile() {
  return (
    <span className="mt-px flex size-[26px] items-center justify-center rounded-[3px] rounded-br-none bg-[#6c7fca]">
      <FaDiscord size={20} color="#fff" />
    </span>
  )
}

function WhatsAppIcon() {
  return (
    <svg width="30" height="30" viewBox="0 0 30 30">
      <path d="M15 1a14 14 0 1 1-6.500 26.300L1 29.300l2.200-7A14 14 0 0 1 15 1z" fill="#fff" />
      <circle cx="15" cy="15" r="11.500" fill="#2dc24a" />
      <path d="M3.500 26.500l1.700-6 4 4.500z" fill="#2dc24a" />
      <path d="M10.500 8.500l2 0 1.500 3.500-1.200 1.600q1.400 2.600 4.200 3.800l1.500-1.600 3.500 1.700q0 3-3 3.700-3.500 0-7.200-3.500-3.300-3.500-3-6.500.4-2 1.700-2.700z" fill="#fff" />
    </svg>
  )
}

function ControlPanelIcon() {
  return (
    <svg width="34" height="30" viewBox="0 0 34 30">
      <rect x="1" y="1" width="31" height="22" fill="#3f9be0" stroke="#9ccdf2" />
      <circle cx="9" cy="9" r="4.500" fill="none" stroke="#d6edff" strokeWidth="1.500" />
      <path d="M9 9V3.500a5.500 5.500 0 0 1 5 5.500z" fill="#f4a62a" />
      <path d="M17.500 5.500h4v3h-4zM23.500 5.500h5v3h-5zM17.500 11.500h4v3h-4zM23.500 11.500h5v3h-5z" fill="#2478c4" stroke="#d6edff" />
      <circle cx="7" cy="18" r="1.300" fill="#f4a62a" />
      <circle cx="11" cy="18" r="1.300" fill="#f4a62a" />
      <circle cx="16" cy="24.500" r="5" fill="#dcdcdc" stroke="#8f8f8f" strokeWidth=".6" />
    </svg>
  )
}

function SpeakerIcon() {
  return (
    <svg width="30" height="32" viewBox="0 0 30 32">
      <path d="M14 1q12-1 14 7 0 12-7 17l-7 5z" fill="#a9acaf" />
      <path d="M22 4q5 7-1 19" stroke="#e9ebec" strokeWidth="1.500" fill="none" />
      <ellipse cx="12.500" cy="16" rx="9.500" ry="14.500" fill="#eef0f1" stroke="#85898c" transform="rotate(10 12 16)" />
      <ellipse cx="12" cy="16" rx="7" ry="11.500" fill="#b7bbbf" stroke="#8d9093" transform="rotate(10 12 16)" />
      <ellipse cx="11" cy="17" rx="3.500" ry="5" fill="#e9ebec" transform="rotate(10 11 17)" />
    </svg>
  )
}

function Taskbar() {
  return (
    <div className="relative flex h-[40px] shrink-0 items-center overflow-hidden bg-[#0d141b] text-[12px] text-white">
      {/* blurred wallpaper under the glass */}
      <svg className="absolute inset-0" width="1920" height="40">
        <defs>
          <filter id="soft" x="-20%" y="-50%" width="140%" height="200%"><feGaussianBlur stdDeviation="3" /></filter>
          <filter id="softer" x="-20%" y="-80%" width="140%" height="260%"><feGaussianBlur stdDeviation="8" /></filter>
        </defs>
        <g filter="url(#softer)">
          <ellipse cx="130" cy="28" rx="60" ry="12" fill="#47504f" />
          <ellipse cx="225" cy="28" rx="30" ry="14" fill="#3a4248" />
          <ellipse cx="790" cy="26" rx="34" ry="14" fill="#4a5b62" />
          <ellipse cx="880" cy="26" rx="30" ry="12" fill="#3b4a54" />
          <ellipse cx="1180" cy="28" rx="32" ry="15" fill="#7393b3" />
          <ellipse cx="1290" cy="30" rx="50" ry="12" fill="#31465a" />
          <ellipse cx="1420" cy="24" rx="60" ry="10" fill="#1f3345" />
          <ellipse cx="1610" cy="24" rx="44" ry="12" fill="#2b3843" />
          <ellipse cx="1850" cy="30" rx="70" ry="14" fill="#35506a" />
        </g>
        <path d="M960 18q40-7 110-4-20 14-55 17l-25 13h-42q0-16 12-26z" fill="#b4d6fa" filter="url(#soft)" />
        <path d="M1245 40l30-10 24 10z" fill="#a8c6e0" filter="url(#soft)" />
        <rect width="1920" height="1" fill="#2b3945" />
        <rect y="1" width="1920" height="1" fill="#73818d" />
      </svg>
      <div className="relative flex flex-1 items-center">
        <span className="ml-[8px]"><StartOrb /></span>
        <span className="ml-[28px] w-[32px]"><IeIcon /></span>
        <span className="ml-[28px] w-[34px]"><ExplorerIcon /></span>
        <span className="ml-[31px] w-[27px]"><PlayerIcon /></span>
        <div className="ml-[20px] flex gap-[4px]">
          <TaskButton><ChromeIcon /></TaskButton>
          <TaskButton><DiscordTile /></TaskButton>
          <TaskButton>
            <span className="flex size-8 items-center justify-center rounded-[2px] bg-black"><SiBattledotnet size={24} color="#1496e6" /></span>
          </TaskButton>
          <TaskButton><WhatsAppIcon /></TaskButton>
          <TaskButton><TreeSizeLogo size={33} /></TaskButton>
          <TaskButton stacked className="mr-[4px] w-[54px]"><ControlPanelIcon /></TaskButton>
          <TaskButton><SpeakerIcon /></TaskButton>
          <TaskButton active><TreeSizeLogo size={33} /></TaskButton>
        </div>
      </div>
      <div className="relative flex h-full items-center">
        <span className="mb-[4px] w-[31px] text-[11.5px]">DE</span>
        <span className="mt-[2px] border-x-4 border-b-[4px] border-x-transparent border-b-[#e4ebf2]" />
        <span className="mt-[2px] ml-[13px] flex size-4 items-center justify-center bg-[#e30f13]">
          <svg width="14" height="14" viewBox="0 0 14 14" fill="none" stroke="#fff" strokeWidth="1.300">
            <path d="M1.500 8.500Q2 3 8 2.500q4.500.5 5 7.500-2-2-4-.8Q7.500 7 5.500 8 3.500 7 1.500 8.500zM7.500 5L5 10q-1 2-3 1" />
          </svg>
        </span>
        <svg className="mt-[2px] ml-[8px]" width="16" height="16" viewBox="0 0 16 16">
          <path d="M1.500 1v14" stroke="#fff" strokeWidth="1.500" />
          <path d="M3 2h6v1.500h6l-2 3 1 2.500H9V8H3z" fill="#fff" />
        </svg>
        <svg className="mt-[2px] ml-[8px]" width="16" height="16" viewBox="0 0 16 16">
          <path d="M5.500 4.500h9v7h-9z" fill="#2a3744" stroke="#fff" strokeWidth="1.300" />
          <path d="M7 14.500h7M10.500 12v2" stroke="#fff" strokeWidth="1.500" />
          <path d="M1 1v3.500h4V1M2.500 4.500V13h3" stroke="#fff" strokeWidth="1.200" fill="none" />
        </svg>
        <svg className="mt-[2px] ml-[8px]" width="16" height="16" viewBox="0 0 16 16">
          <path d="M1 5.500h2.500L7.500 1.500v13l-4-4H1z" fill="#fff" />
          <path d="M9.500 5.500q1.500 2.500 0 5M11.500 4q2.500 4 0 8M13.500 3q3 5 0 10" stroke="#d7e0e8" fill="none" />
        </svg>
        <div className="mt-[2px] ml-[13px] flex w-[64px] flex-col text-center text-[11.5px] leading-[17px] tracking-[-0.25px]">
          <span>16:30</span>
          <span>26.09.2018</span>
        </div>
        <span className="ml-[7px] h-[38px] w-[14px] self-end border border-[#7f8c98] bg-linear-to-b from-[#707b86] to-[#2c3a47]" />
      </div>
    </div>
  )
}

export default function App() {
  return (
    <div className="flex h-[1080px] w-[1920px] flex-col overflow-hidden bg-white font-['Open_Sans','Noto_Sans',sans-serif] tracking-[-0.15px] text-black">
      <TitleBar />
      <RibbonTabs />
      <Ribbon />
      <AddressBar />
      <div className="flex h-[851px] shrink-0">
        <div className="w-[479px] shrink-0 bg-white">
          <TreePanel />
          <DrivePanel />
        </div>
        <RightPanel />
      </div>
      <StatusBar />
      <Taskbar />
    </div>
  )
}
